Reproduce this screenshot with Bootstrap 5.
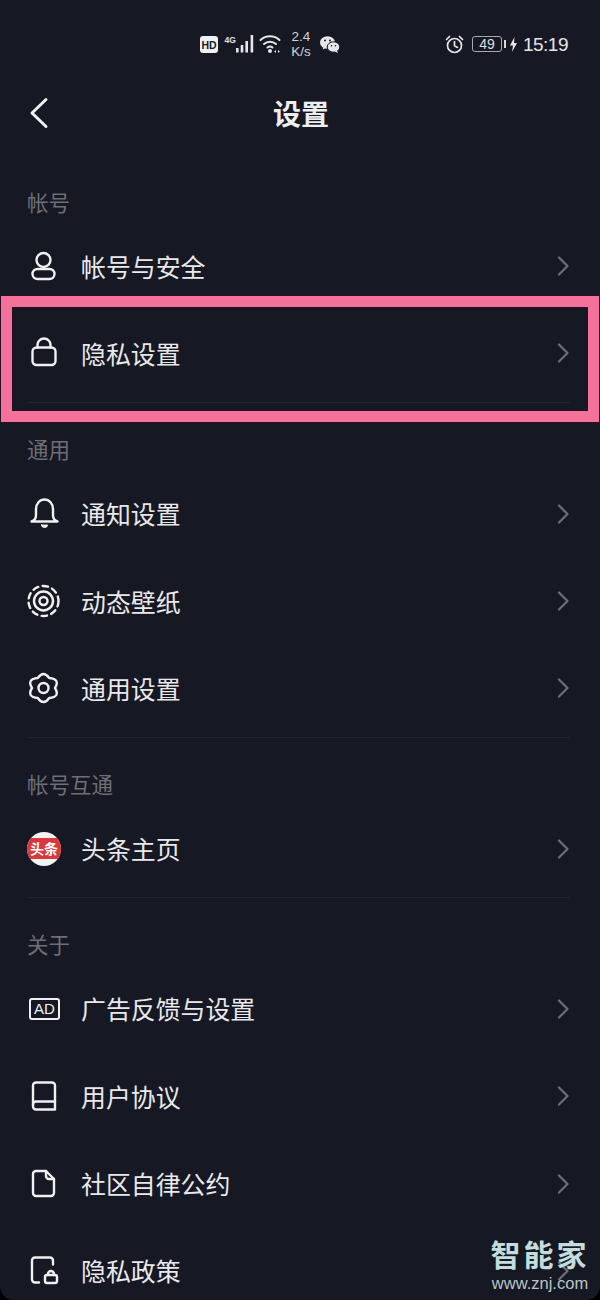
<!DOCTYPE html>
<html lang="zh">
<head>
    <meta charset="UTF-8">
    <title>设置</title>
    <link href="https://cdn.jsdelivr.net/npm/bootstrap@5.3.0/dist/css/bootstrap.min.css" rel="stylesheet">
    <style>
        html, body { height: 1300px; overflow: hidden; background: #000; }
        body { font-family: "Liberation Sans", "Noto Sans CJK SC", sans-serif; }
        .app-frame { position: relative; height: 1300px; overflow: hidden; background: #161823; color: #e9e9eb; border-radius: 0 0 14px 14px; }

        .status-bar { height: 88px; padding: 0 32px 0 200px; color: #e6e6e8; }
        .status-bar svg { display: block; }
        .speed-text { width: 22px; font-size: 13.5px; line-height: 15px; text-align: center; color: #d4d4d6; white-space: nowrap; }
        .batt-box { width: 30px; height: 16px; border: 1px solid #a9a9ad; border-radius: 3px; font-size: 14px; line-height: 14px; text-align: center; color: #dedee0; }
        .batt-tip { width: 2px; height: 8px; margin-left: 2px; background: #d8d8da; }
        .clock-text { margin-left: 6px; font-size: 19px; letter-spacing: -.5px; line-height: 1; }

        .head-bar { height: 50px; display: grid; grid-template-columns: 1fr auto 1fr; padding-left: 29px; padding-right: 27px; }
        .head-title { font-size: 28px; font-weight: 700; font-family: "Noto Sans CJK SC", sans-serif; line-height: 50px; color: #eeeeef; }

        .setting-groups { padding-top: 42.5px; }
        .group-label { height: 42px; padding-left: 27px; font-size: 21.5px; line-height: 42px; font-family: "Noto Sans CJK SC", sans-serif; color: #6d6e76; }
        .setting-row { height: 87.3px; padding: 0 31px 0 27px; gap: 20px; background: transparent; border: 0; color: #e9e9eb; border-radius: 0 !important; }
        .row-icon { width: 34px; height: 34px; flex: none; fill: none; stroke: #f0f0f1; stroke-width: 2.4; stroke-linecap: round; stroke-linejoin: round; }
        .row-text { flex: 1; font-size: 24.9px; line-height: 1; font-family: "Noto Sans CJK SC", sans-serif; }
        .row-arrow { width: 12px; height: 20px; flex: none; fill: none; stroke: #6d6e76; stroke-width: 2.2; stroke-linecap: round; stroke-linejoin: round; }
        .group-rule { height: 1px; margin: 5px 30px 25px 27px; background: #22242e; }

        .ad-icon { width: 31px; height: 22px; flex: none; margin: 0 1px 0 2px; border: 2px solid #f0f0f1; border-radius: 3px; font-size: 15px; line-height: 18px; text-align: center; color: #f0f0f1; }
        .toutiao-icon { width: 34px; height: 34px; flex: none; border-radius: 50%; overflow: hidden; background: #f4f2f2; }
        .toutiao-band { height: 21px; background: #d9383d; color: #fff; font-size: 14px; line-height: 21px; font-weight: 700; text-align: center; white-space: nowrap; font-family: "Noto Sans CJK SC", sans-serif; }

        .pink-frame { position: absolute; left: 1px; right: 1px; top: 296px; height: 126px; border: 11px solid #f4729a; box-shadow: inset 0 0 0 1px #2a1026, 0 0 0 1px #2a1026; pointer-events: none; }
        .water-mark { position: absolute; left: 490px; top: 1238.5px; width: 100px; text-align: center; color: #c3dcdc; }
        .water-big { font-family: "Liberation Sans", "Noto Sans CJK SC", sans-serif; font-size: 30px; line-height: 34px; font-weight: 700; letter-spacing: 3px; white-space: nowrap; }
        .water-small { margin-top: 1px; font-size: 16.5px; line-height: 18px; color: #b9c6c9; white-space: nowrap; }
    </style>
</head>
<body>
<div class="app-frame">

    <div class="status-bar d-flex align-items-center justify-content-between">
        <div class="d-flex align-items-center">
            <svg width="18" height="17" viewBox="0 0 18 17"><rect width="18" height="17" rx="3" fill="#f0f0f0"/><text x="9" y="13" text-anchor="middle" font-size="10.5" font-weight="700" font-family="Liberation Sans" fill="#161823">HD</text></svg>
            <svg class="ms-1" width="32" height="18" viewBox="0 0 32 18" fill="#e6e6e8"><text x="2.500" y="7.500" font-size="8.500" font-weight="700" font-family="Liberation Sans">4G</text><rect x="14" y="13" width="2.600" height="4.500"/><rect x="18.700" y="10" width="2.600" height="7.500"/><rect x="23.400" y="6" width="2.600" height="11.500"/><rect x="28.600" y="0" width="2.600" height="17.500"/></svg>
            <svg class="ms-1" width="24" height="20" viewBox="0 0 22 20" fill="none" stroke="#e6e6e8" stroke-width="2" stroke-linecap="round"><path d="M1.500 6a14 14 0 0 1 19 0"/><path d="M5 10a9 9 0 0 1 12 0"/><path d="M8.500 13.500a4 4 0 0 1 5 0"/><circle cx="11" cy="17" r="1" fill="#e6e6e8"/><path d="M17 16l-1.800 1.500 1.800 1.500zM19 16l1.800 1.500-1.800 1.500z" fill="#e6e6e8" stroke="none"/></svg>
            <div class="speed-text ms-2">2.4<br>K/s</div>
            <svg class="ms-2" width="20" height="17" viewBox="0 0 20 17" fill="#e6e6e8"><ellipse cx="7.500" cy="6.500" rx="7.500" ry="6.300"/><path d="M3.500 10.500l-.8 3 3.500-2z"/><ellipse cx="13.500" cy="11" rx="6.300" ry="5.200" stroke="#161823"/><path d="M17 14.500l.8 2.400-3-1.500z"/><circle cx="5" cy="4.600" r="1" fill="#161823"/><circle cx="10" cy="4.600" r="1" fill="#161823"/><circle cx="11.500" cy="9.800" r=".8" fill="#161823"/><circle cx="15.500" cy="9.800" r=".8" fill="#161823"/></svg>
        </div>
        <div class="d-flex align-items-center">
            <svg width="19" height="19" viewBox="0 0 19 19" fill="none" stroke="#e6e6e8" stroke-width="1.700" stroke-linecap="round"><circle cx="9.500" cy="10.500" r="7"/><path d="M9.500 6.500v4.300l3 1.600M1.500 4.500l3-3M17.500 4.500l-3-3"/></svg>
            <div class="batt-box ms-2">49</div>
            <div class="batt-tip"></div>
            <svg class="ms-1" width="7" height="15" viewBox="0 0 7 15" fill="#e6e6e8"><path d="M4.500 0L0 8.500h3L2 15l5-9H4z"/></svg>
            <div class="clock-text">15:19</div>
        </div>
    </div>

    <div class="head-bar align-items-center">
        <svg width="20" height="32" viewBox="0 0 20 32" fill="none" stroke="#f0f0f1" stroke-width="3" stroke-linecap="round" stroke-linejoin="round"><path d="M17 2.500L3 16l14 13.500"/></svg>
        <div class="head-title">设置</div>
        <div></div>
    </div>

    <div class="setting-groups">
        <div class="group-label">帐号</div>
        <div class="list-group list-group-flush">
            <a class="list-group-item setting-row d-flex align-items-center">
                <svg class="row-icon" viewBox="0 0 34 34"><circle cx="16.500" cy="11" r="7"/><rect x="5.500" y="20" width="22" height="10" rx="5"/></svg>
                <span class="row-text">帐号与安全</span>
                <svg class="row-arrow" viewBox="0 0 12 20"><path d="M2 1.500L10.500 10 2 18.500"/></svg>
            </a>
            <a class="list-group-item setting-row d-flex align-items-center">
                <svg class="row-icon" viewBox="0 0 34 34"><rect x="5.500" y="11.500" width="23" height="17.500" rx="4"/><path d="M10.500 11.500V9a6.500 6.500 0 0 1 13 0v2.500"/></svg>
                <span class="row-text">隐私设置</span>
                <svg class="row-arrow" viewBox="0 0 12 20"><path d="M2 1.500L10.500 10 2 18.500"/></svg>
            </a>
        </div>
        <div class="group-rule"></div>

        <div class="group-label">通用</div>
        <div class="list-group list-group-flush">
            <a class="list-group-item setting-row d-flex align-items-center">
                <svg class="row-icon" viewBox="0 0 34 34"><path d="M4.500 24.500c3-1 4.500-3 4.500-6.500v-6a8.500 9.500 0 0 1 17 0v6c0 3.500 1.500 5.500 4.500 6.500z"/><path d="M14.500 28h6a3 2.500 0 0 1-6 0z" fill="#f0f0f1" stroke-width="1"/></svg>
                <span class="row-text">通知设置</span>
                <svg class="row-arrow" viewBox="0 0 12 20"><path d="M2 1.500L10.500 10 2 18.500"/></svg>
            </a>
            <a class="list-group-item setting-row d-flex align-items-center">
                <svg class="row-icon" viewBox="0 0 34 34"><circle cx="16.500" cy="17" r="15" stroke-dasharray="5.500 4.400"/><circle cx="16.500" cy="17" r="9.500"/><circle cx="16.500" cy="17" r="4"/></svg>
                <span class="row-text">动态壁纸</span>
                <svg class="row-arrow" viewBox="0 0 12 20"><path d="M2 1.500L10.500 10 2 18.500"/></svg>
            </a>
            <a class="list-group-item setting-row d-flex align-items-center">
                <svg class="row-icon" viewBox="0 0 34 34"><path d="M10.750 7.040Q16.500-1 22.250 7.040Q33.500 8 28 17Q33.500 26 22.250 26.960Q16.500 35 10.750 26.960Q-.5 26 5 17Q-.5 8 10.750 7.040Z"/><circle cx="16.500" cy="17" r="5"/></svg>
                <span class="row-text">通用设置</span>
                <svg class="row-arrow" viewBox="0 0 12 20"><path d="M2 1.500L10.500 10 2 18.500"/></svg>
            </a>
        </div>
        <div class="group-rule"></div>

        <div class="group-label">帐号互通</div>
        <div class="list-group list-group-flush">
            <a class="list-group-item setting-row d-flex align-items-center">
                <div class="toutiao-icon d-flex align-items-center"><div class="toutiao-band w-100">头条</div></div>
                <span class="row-text">头条主页</span>
                <svg class="row-arrow" viewBox="0 0 12 20"><path d="M2 1.500L10.500 10 2 18.500"/></svg>
            </a>
        </div>
        <div class="group-rule"></div>

        <div class="group-label">关于</div>
        <div class="list-group list-group-flush">
            <a class="list-group-item setting-row d-flex align-items-center">
                <div class="ad-icon">AD</div>
                <span class="row-text">广告反馈与设置</span>
                <svg class="row-arrow" viewBox="0 0 12 20"><path d="M2 1.500L10.500 10 2 18.500"/></svg>
            </a>
            <a class="list-group-item setting-row d-flex align-items-center">
                <svg class="row-icon" viewBox="0 0 34 34"><path d="M9 3.500h16a3 3 0 0 1 3 3v24H9a3 3 0 0 1-3-3v-21a3 3 0 0 1 3-3z"/><path d="M6 25.500a3 3 0 0 1 3-3h19"/></svg>
                <span class="row-text">用户协议</span>
                <svg class="row-arrow" viewBox="0 0 12 20"><path d="M2 1.500L10.500 10 2 18.500"/></svg>
            </a>
            <a class="list-group-item setting-row d-flex align-items-center">
                <svg class="row-icon" viewBox="0 0 34 34"><path d="M9 4h10l8 8v14a3 3 0 0 1-3 3H9a3 3 0 0 1-3-3V7a3 3 0 0 1 3-3z"/><path d="M19 4v5a3 3 0 0 0 3 3h5"/></svg>
                <span class="row-text">社区自律公约</span>
                <svg class="row-arrow" viewBox="0 0 12 20"><path d="M2 1.500L10.500 10 2 18.500"/></svg>
            </a>
            <a class="list-group-item setting-row d-flex align-items-center">
                <svg class="row-icon" viewBox="0 0 34 34"><path d="M12 28.500H8a3 3 0 0 1-3-3V6.500a3 3 0 0 1 3-3h15a3 3 0 0 1 3 3v4"/><rect x="18" y="21" width="12" height="8" rx="2"/><path d="M21 21v-1a3 3 0 0 1 6 0v1"/></svg>
                <span class="row-text">隐私政策</span>
                <svg class="row-arrow" viewBox="0 0 12 20"><path d="M2 1.500L10.500 10 2 18.500"/></svg>
            </a>
        </div>
    </div>

    <div class="pink-frame"></div>

    <div class="water-mark">
        <div class="water-big">智能家</div>
        <div class="water-small">www.znj.com</div>
    </div>
</div>
<script src="https://cdn.jsdelivr.net/npm/bootstrap@5.3.0/dist/js/bootstrap.bundle.min.js"></script>
</body>
</html>
